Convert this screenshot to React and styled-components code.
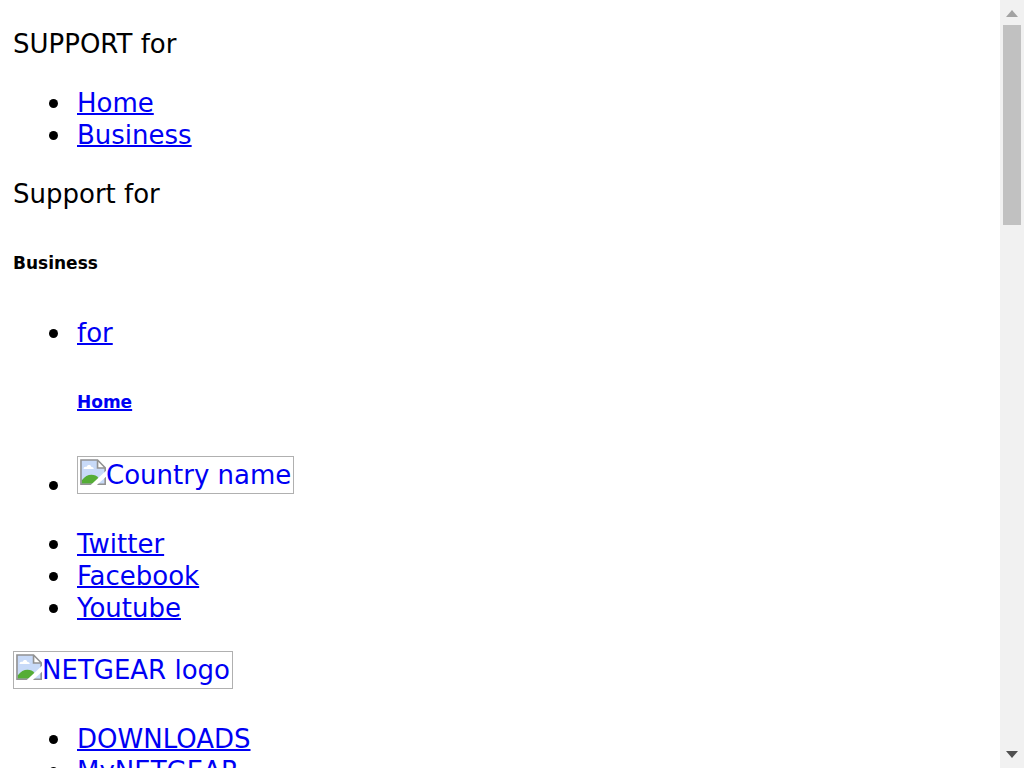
import React from 'react';
import styled, { createGlobalStyle } from 'styled-components';

const GlobalStyle = createGlobalStyle`
  * { box-sizing: border-box; }
  html, body { margin: 0; background: #fff; }
  body { overflow: hidden; font-family: "DejaVu Sans", sans-serif; font-size: 26px; line-height: 32px; color: #000; }
`;

const Shell = styled.div`
  display: flex;
  height: 100vh;
  overflow: hidden;
`;

const Page = styled.main`
  flex: 1;
  min-width: 0;
  padding: 28px 13px 0;
  overflow: hidden;
`;

const Line = styled.p`
  margin: 0 0 27px;
`;

const List = styled.ul`
  list-style: none;
  margin: 27px 0;
  padding-left: 64px;
`;

const Item = styled.li`
  &::before {
    content: "";
    display: inline-block;
    width: 9px;
    height: 9px;
    margin: 0 19px 0 -28px;
    border-radius: 50%;
    background: #000;
    vertical-align: 4px;
  }
`;

const Link = styled.a`
  color: #0000f4;
  text-decoration: underline;
  text-decoration-thickness: 2px;
`;

const Heading = styled.h6`
  margin: 43px 0;
  font-size: 17px;
  line-height: 21px;
`;

const MissingImage = styled.span`
  display: inline-block;
  overflow: hidden;
  height: 38px;
  padding: 2px;
  border: 1px solid #b0b0b0;
  white-space: nowrap;
`;

const Icon = styled.svg`
  display: inline-block;
  width: 26px;
  height: 26px;
  vertical-align: -1px;
`;

const BrokenIcon = () => (
  <Icon viewBox="0 0 16 16" aria-hidden="true">
    <path d="M.5.5h10.3l4.7 4.8v10.2H.5z" fill="#c8daf8" />
    <path d="M2.2 6.2c0-1.3 1-1.7 1.8-1.3.6-1.6 2.7-1.5 3 0 1.2-.1 1.5.6 1.4 1.3z" fill="#fff" />
    <path d="M1 15.3v-2C2.8 10.7 5 9.7 7 9.7c2 0 3.3.7 4.4 2v3.6z" fill="#55ad36" />
    <path d="M10.8.8 15.3 5.5h-4.5z" fill="#fff" />
    <path d="M.6.6h10.2l4.7 4.8v10.1H.6zM10.8.8v4.7h4.5" fill="none" stroke="#929292" strokeWidth="1" />
    <path d="M16 7.3 6.6 16h3.8L16 10.9z" fill="#fff" />
  </Icon>
);

const Scrollbar = styled.div`
  flex: 0 0 24px;
  display: flex;
  flex-direction: column;
  align-items: center;
  background: #f1f1f1;
`;

const Thumb = styled.div`
  width: 18px;
  height: 200px;
  background: #c1c1c1;
  margin-bottom: auto;
`;

const Arrow = ({ down }) => (
  <svg width="24" height="25" viewBox="0 0 24 25" aria-hidden="true">
    <path d={down ? 'M6 8h12l-6 7z' : 'M6 17h12l-6-7z'} fill={down ? '#505050' : '#a3a3a3'} />
  </svg>
);

const Links = ({ items }) => (
  <List>
    {items.map((item) => (
      <Item key={item}><Link href="#">{item}</Link></Item>
    ))}
  </List>
);

export default function App() {
  return (
    <Shell>
      <GlobalStyle />
      <Page>
        <Line>SUPPORT for</Line>
        <Links items={['Home', 'Business']} />
        <Line>Support for</Line>
        <Heading>Business</Heading>
        <List>
          <Item>
            <Link href="#">for<Heading>Home</Heading></Link>
          </Item>
          <Item>
            <Link href="#"><MissingImage><BrokenIcon />Country name</MissingImage></Link>
          </Item>
        </List>
        <Links items={['Twitter', 'Facebook', 'Youtube']} />
        <Link href="#"><MissingImage><BrokenIcon />NETGEAR logo</MissingImage></Link>
        <Links items={['DOWNLOADS', 'MyNETGEAR']} />
      </Page>
      <Scrollbar>
        <Arrow />
        <Thumb />
        <Arrow down />
      </Scrollbar>
    </Shell>
  );
}
